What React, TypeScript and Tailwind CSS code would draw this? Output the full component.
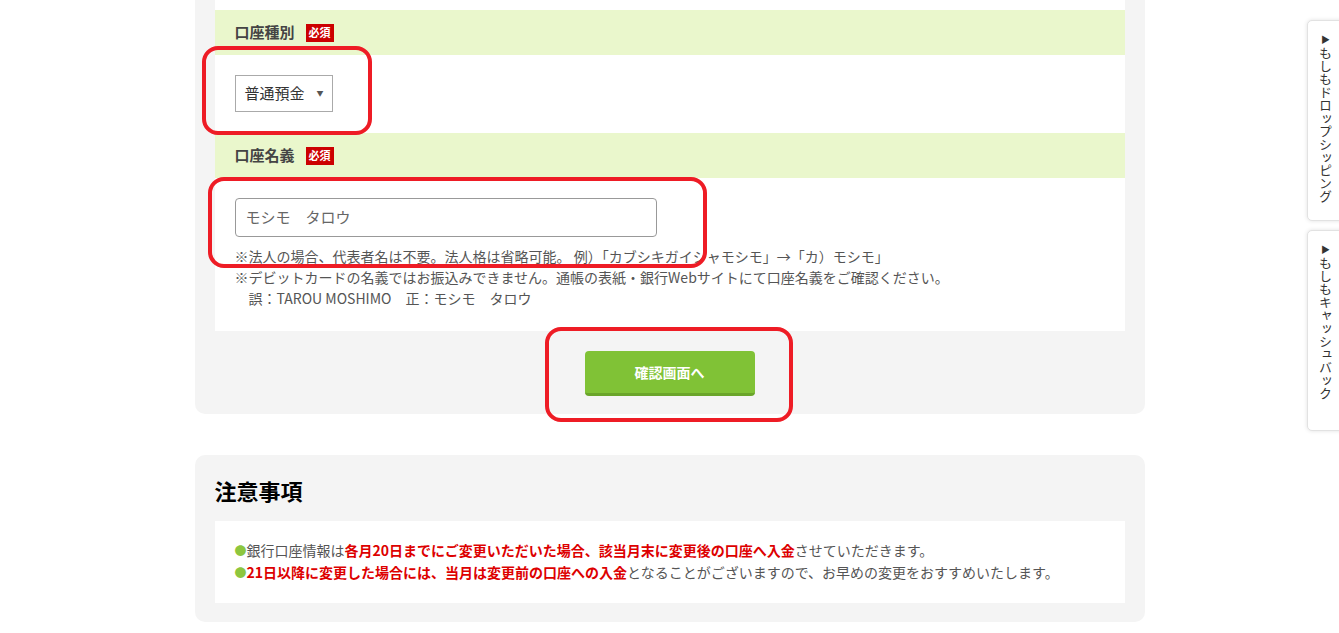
const font = "font-['Noto_Sans_CJK_JP','Noto_Sans',sans-serif]";

const Badge = () => (
  <span className="ml-[11px] inline-flex h-[18px] items-center bg-[#cc0000] px-[3px] text-[11px] font-bold leading-none text-white">
    必須
  </span>
);

const FieldHeader = ({ label }: { label: string }) => (
  <div className="flex h-[45px] items-center bg-[#eaf7cc] px-[20px]">
    <span className="text-[15px] font-bold text-[#444]">{label}</span>
    <Badge />
  </div>
);

const Annotation = ({ className }: { className: string }) => (
  <div className={`pointer-events-none absolute rounded-[16px] border-[4px] border-[#ee1c25] ${className}`} />
);

const SideTab = ({ label }: { label: string }) => (
  <div className="flex h-[201px] w-[36px] justify-center rounded-l-[5px] border border-[#e2e2e2] bg-white pt-[14px] shadow-[0_0_4px_rgba(0,0,0,0.12)]">
    <span className="text-[13px] leading-[16px] text-[#333] [writing-mode:vertical-rl]">
      <span className="text-[9px]">▶</span> {label}
    </span>
  </div>
);

export default function App() {
  return (
    <div className={`relative min-h-[633px] w-full bg-white ${font}`}>
      <div className="mx-auto w-[950px]">
        {/* form panel */}
        <div className="rounded-b-[10px] bg-[#f4f4f4] px-[20px] pb-[18px]">
          <div className="bg-white">
            <div className="h-[10px]" />
            <FieldHeader label="口座種別" />
            <div className="h-[78px] px-[20px] pt-[20px]">
              <div className="flex h-[37px] w-[98px] items-center justify-between border border-[#aaa] bg-white pl-[9px] pr-[8px]">
                <span className="text-[15px] text-[#333]">普通預金</span>
                <span className="text-[7px] text-[#555]">▼</span>
              </div>
            </div>
            <FieldHeader label="口座名義" />
            <div className="px-[20px] pb-[22px] pt-[20px]">
              <div className="flex h-[39px] w-[422px] items-center rounded-[4px] border border-[#999] px-[10px]">
                <span className="text-[15px] text-[#666]">モシモ　タロウ</span>
              </div>
              <div className="mt-[9px] text-[14px] leading-[21px] text-[#555]">
                <p>※法人の場合、代表者名は不要。法人格は省略可能。 例）「カブシキガイシャモシモ」→「カ）モシモ」</p>
                <p>※デビットカードの名義ではお振込みできません。通帳の表紙・銀行Webサイトにて口座名義をご確認ください。</p>
                <p className="pl-[14px]">誤：TAROU MOSHIMO　正：モシモ　タロウ</p>
              </div>
            </div>
          </div>
          <div className="flex justify-center pt-[20px]">
            <button className="h-[45px] w-[170px] rounded-[4px] border-b-[3px] border-[#6aa52a] bg-[#80c236] text-[14px] font-bold text-white">
              確認画面へ
            </button>
          </div>
        </div>

        {/* notice panel */}
        <div className="mt-[41px] rounded-[10px] bg-[#f4f4f4] px-[20px] pb-[19px] pt-[20px]">
          <h2 className="text-[22px] font-bold leading-[30px] text-black">注意事項</h2>
          <div className="mt-[16px] bg-white px-[20px] pb-[20px] pt-[18px] text-[14px] leading-[22px] text-[#555]">
            <p className="h-[22px]">
              <span className="text-[12px] leading-none text-[#8dc63f]">●</span>銀行口座情報は
              <span className="font-bold text-[#dd0000]">各月20日までにご変更いただいた場合、該当月末に変更後の口座へ入金</span>
              させていただきます。
            </p>
            <p className="h-[22px]">
              <span className="text-[12px] leading-none text-[#8dc63f]">●</span>
              <span className="font-bold text-[#dd0000]">21日以降に変更した場合には、当月は変更前の口座への入金</span>
              となることがございますので、お早めの変更をおすすめいたします。
            </p>
          </div>
        </div>
        <div className="h-[11px]" />
      </div>

      {/* red annotation overlays */}
      <Annotation className="left-[202px] top-[46px] h-[89px] w-[170px]" />
      <Annotation className="left-[208px] top-[177px] h-[91px] w-[499px]" />
      <Annotation className="left-[545px] top-[327px] h-[95px] w-[248px]" />

      {/* side tabs */}
      <div className="absolute right-[-4px] top-[20px] flex flex-col gap-[9px]">
        <SideTab label="もしもドロップシッピング" />
        <SideTab label="もしもキャッシュバック" />
      </div>
    </div>
  );
}
